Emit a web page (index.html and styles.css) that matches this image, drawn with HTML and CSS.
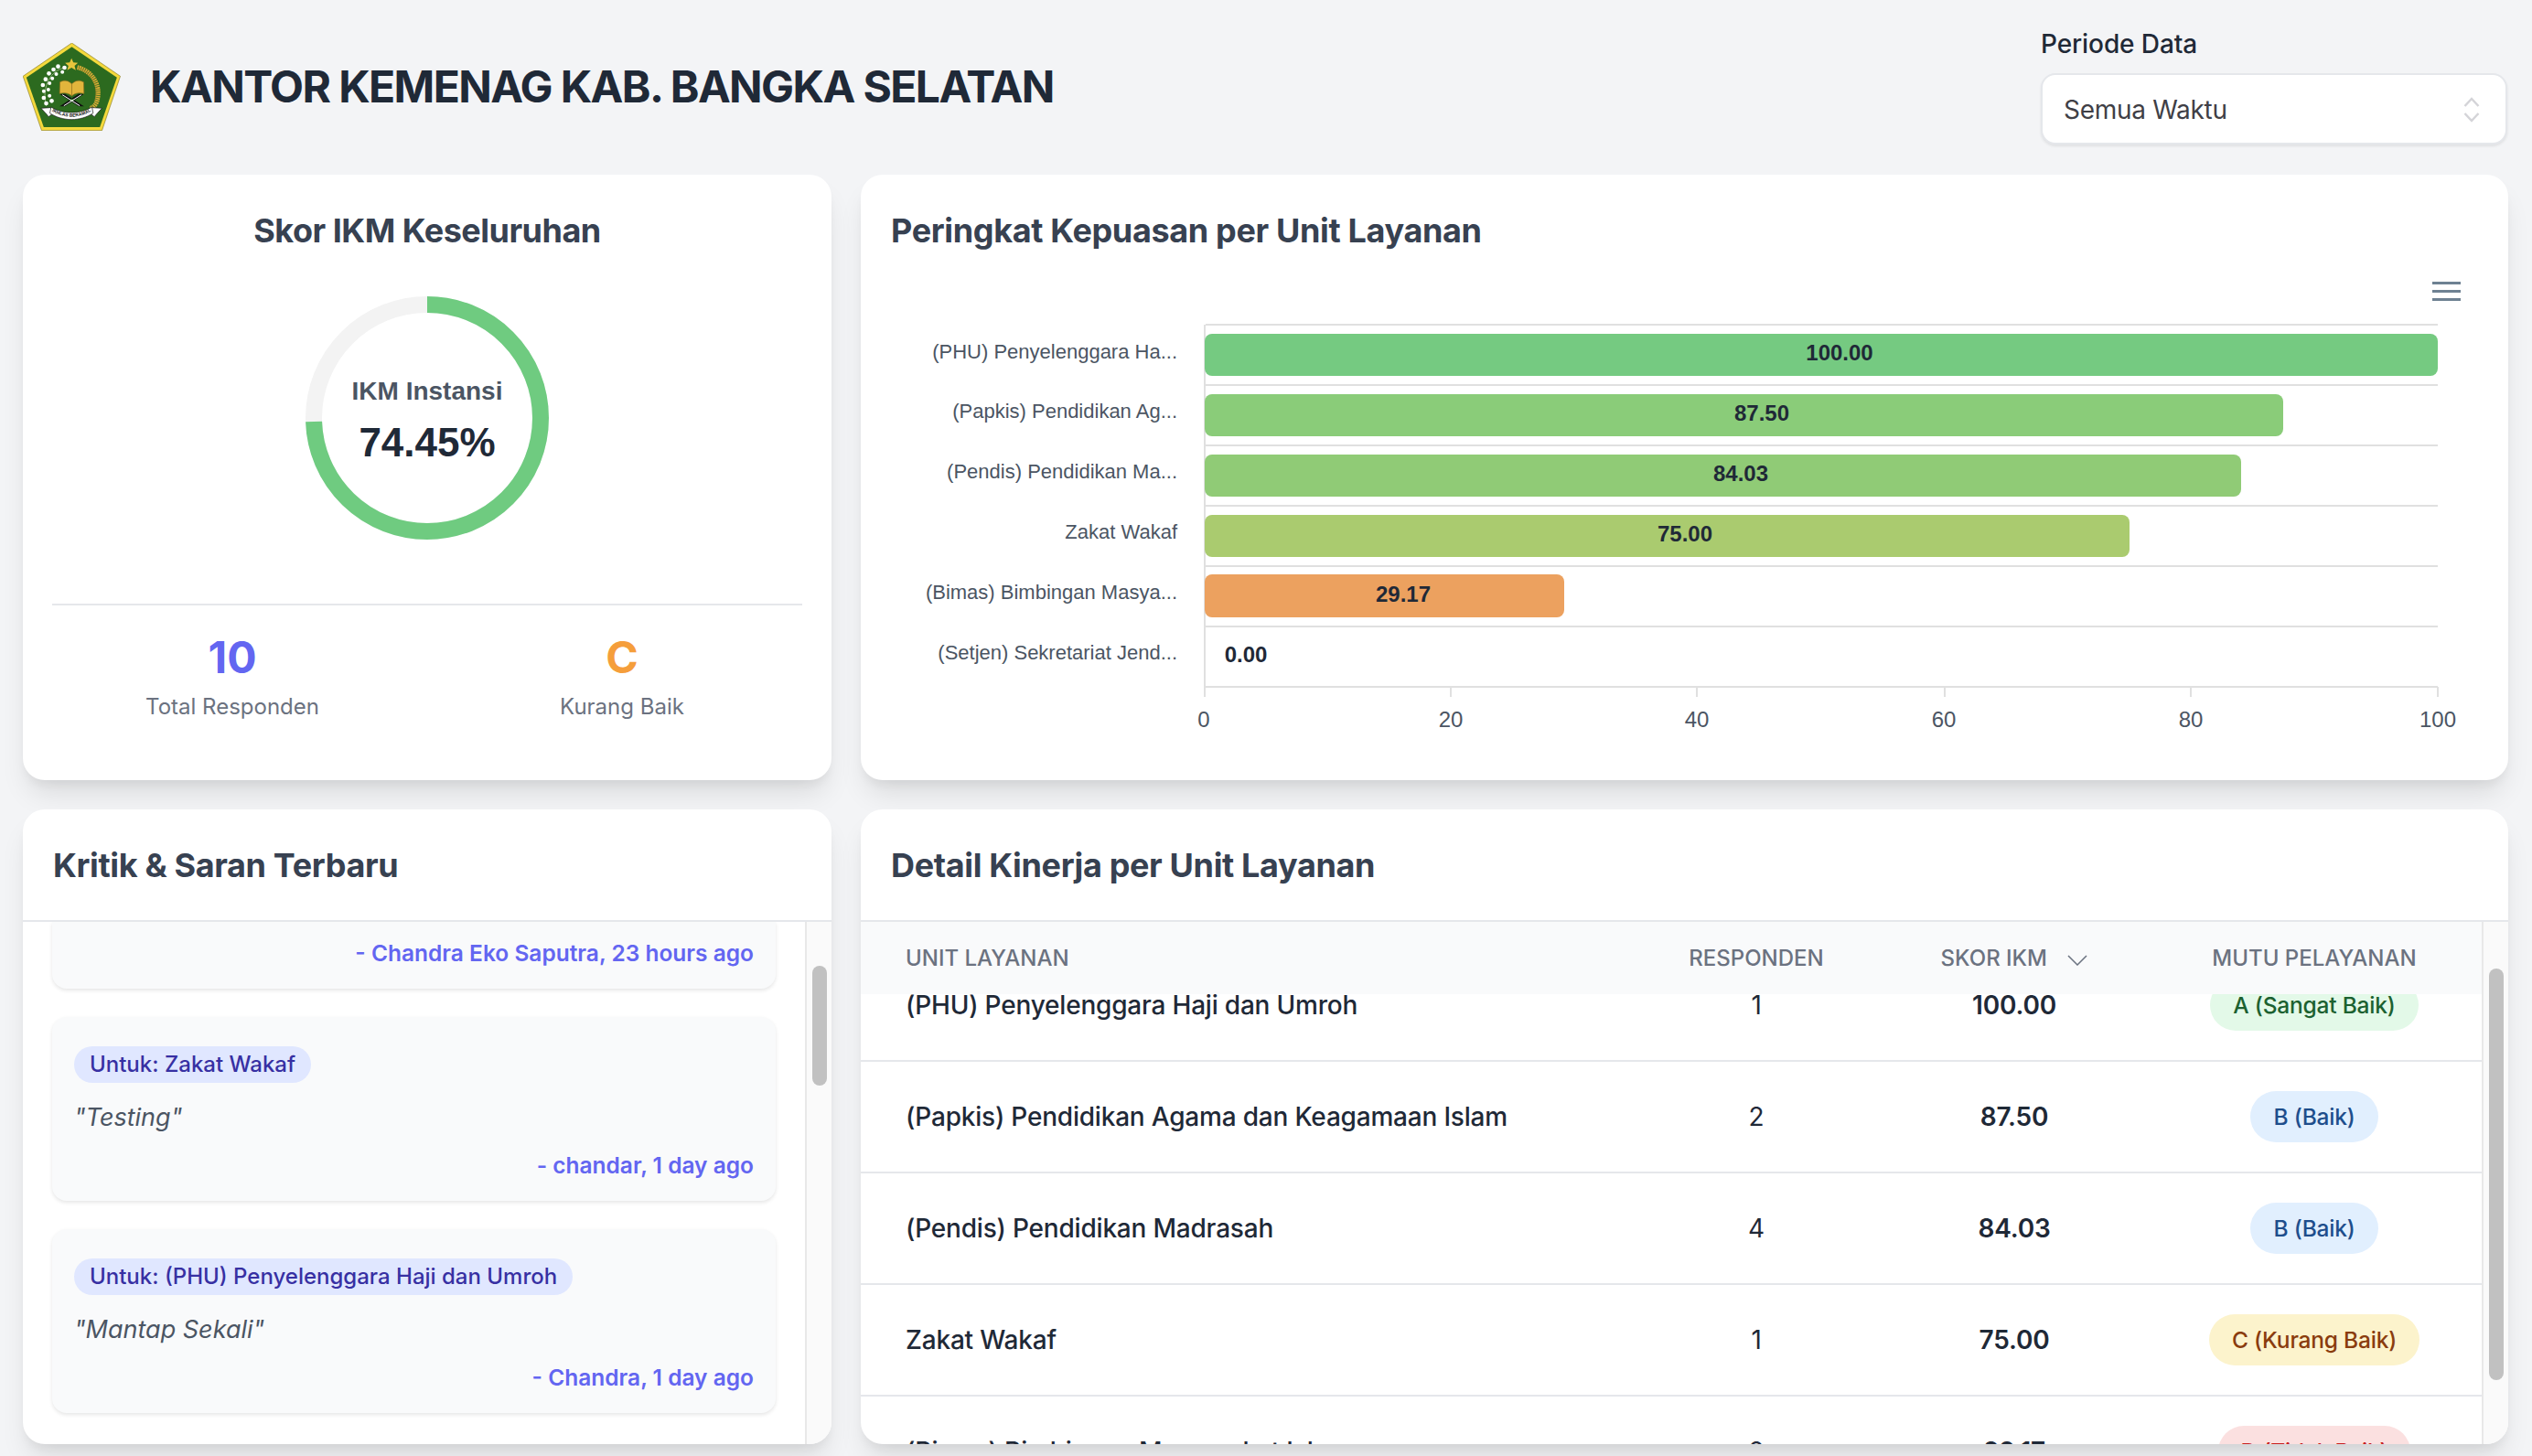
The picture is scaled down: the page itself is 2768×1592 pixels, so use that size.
FILE: index.html
```html
<!DOCTYPE html>
<html lang="id">
<head>
  <meta charset="UTF-8" />
  <meta name="viewport" content="width=device-width, initial-scale=1" />
  <title>Dashboard IKM</title>
  <link rel="stylesheet" href="styles.css">
</head>
<body>
  <div class="page">
    <header class="top">
      <div class="brand">
        <svg class="logo" viewBox="76 138 320 288">
          <polygon points="236,138 395,247 335,425 137,425 76,247" fill="#f4d93c" stroke="#8a7d2a" stroke-width="2"/>
          <polygon points="236,151 384,251 328,414 144,414 87,251" fill="#2c6a1f"/>
          <polygon points="235,188 241,202 256,203 245,213 249,227 235,219 221,227 225,213 214,203 229,202" fill="#e8c53c"/>
          <!-- padi -->
          <path d="M254 218 C300 228 335 275 318 330 C314 342 306 350 296 352" fill="none" stroke="#d9ab35" stroke-width="15" stroke-dasharray="5 2"/>
          <path d="M258 220 C298 232 326 275 312 328" fill="none" stroke="#a9862a" stroke-width="2"/>
          <!-- kapas -->
          <path d="M212 220 C170 225 135 280 152 345" fill="none" stroke="#8fb07a" stroke-width="3"/>
          <g fill="#fff">
            <circle cx="212" cy="219" r="7"/><circle cx="191" cy="215" r="7"/><circle cx="205" cy="233" r="6"/>
            <circle cx="176" cy="225" r="7"/><circle cx="185" cy="240" r="6"/><circle cx="161" cy="238" r="7"/>
            <circle cx="172" cy="254" r="6"/><circle cx="150" cy="257" r="7"/><circle cx="163" cy="270" r="6"/>
            <circle cx="141" cy="276" r="7"/><circle cx="159" cy="291" r="6"/><circle cx="144" cy="296" r="6"/>
            <circle cx="144" cy="318" r="7"/><circle cx="163" cy="311" r="6"/><circle cx="170" cy="328" r="7"/>
            <circle cx="152" cy="336" r="7"/>
          </g>
          <!-- kitab -->
          <path d="M236 272 C222 258 208 260 197 266 L196 304 C212 300 226 302 236 312 C246 302 260 300 276 304 L275 266 C264 260 250 258 236 272 Z" fill="#e2b53c" stroke="#8b6a1c" stroke-width="2"/>
          <path d="M236 272 L236 312" stroke="#8b6a1c" stroke-width="2"/>
          <path d="M197 306 L258 346 L276 346 L214 305 Z M275 306 L214 346 L196 346 L258 305 Z" fill="#111"/>
          <path d="M205 308 L262 344 M267 308 L210 344" stroke="#fff" stroke-width="3"/>
          <!-- pita -->
          <path d="M135 352 L166 350 L178 366 L160 380 L150 368 Z M335 352 L304 350 L292 366 L310 380 L320 368 Z" fill="#fff" stroke="#111" stroke-width="2"/>
          <path d="M168 348 C205 372 265 372 302 348 L306 368 C265 396 205 396 164 368 Z" fill="#fff" stroke="#111" stroke-width="2"/>
          <path id="ribbon-line" d="M172 362 C208 386 262 386 298 362" fill="none"/>
          <text class="logo-text"><textPath href="#ribbon-line" startOffset="50%" text-anchor="middle">IKHLAS BERAMAL</textPath></text>
        </svg>
        <h1>KANTOR KEMENAG KAB. BANGKA SELATAN</h1>
      </div>
      <div class="period">
        <label>Periode Data</label>
        <div class="select">
          <span>Semua Waktu</span>
          <svg class="select-arrows" width="18" height="28" viewBox="0 0 18 28">
            <path d="M1.5 10 L9 2 L16.5 10 M1.5 18 L9 26 L16.5 18" fill="none" stroke="#d4d4d8" stroke-width="2.5"/>
          </svg>
        </div>
      </div>
    </header>

    <main class="dashboard">
      <section class="card">
        <h2 class="card-title center">Skor IKM Keseluruhan</h2>
        <svg class="ring" width="266" height="266" viewBox="0 0 266 266">
          <circle cx="133" cy="133" r="124" fill="none" stroke="#f3f3f3" stroke-width="18"/>
          <circle cx="133" cy="133" r="124" fill="none" stroke="#6fcb80" stroke-width="18" stroke-dasharray="580 780" transform="rotate(-90 133 133)"/>
          <text class="ring-label" x="133" y="113">IKM Instansi</text>
          <text class="ring-value" x="133" y="175">74.45%</text>
        </svg>
        <div class="stats">
          <div class="stat">
            <div class="stat-num indigo">10</div>
            <div class="stat-label">Total Responden</div>
          </div>
          <div class="stat">
            <div class="stat-num orange">C</div>
            <div class="stat-label">Kurang Baik</div>
          </div>
        </div>
      </section>

      <section class="card">
        <h2 class="card-title">Peringkat Kepuasan per Unit Layanan</h2>
        <svg class="chart" width="1801" height="580" viewBox="941 273 1801 580">
          <g fill="#6e8192">
            <rect x="2659" y="308" width="31" height="3"/>
            <rect x="2659" y="317" width="31" height="3"/>
            <rect x="2659" y="326" width="31" height="3"/>
          </g>
          <g class="grid">
            <line x1="1318" x2="2665" y1="355" y2="355"/>
            <line x1="1318" x2="2665" y1="421" y2="421"/>
            <line x1="1318" x2="2665" y1="487" y2="487"/>
            <line x1="1318" x2="2665" y1="553" y2="553"/>
            <line x1="1318" x2="2665" y1="619" y2="619"/>
            <line x1="1318" x2="2665" y1="685" y2="685"/>
            <line x1="1318" x2="2665" y1="751" y2="751"/>
            <line x1="1317" x2="1317" y1="355" y2="762"/>
            <line x1="1586" x2="1586" y1="751" y2="762"/>
            <line x1="1855" x2="1855" y1="751" y2="762"/>
            <line x1="2126" x2="2126" y1="751" y2="762"/>
            <line x1="2395" x2="2395" y1="751" y2="762"/>
            <line x1="2665" x2="2665" y1="751" y2="762"/>
          </g>
          <rect x="1317" y="365" width="1348" height="46" rx="8" fill="#75ca81"/>
          <rect x="1317" y="431" width="1179" height="46" rx="8" fill="#8acc79"/>
          <rect x="1317" y="497" width="1133" height="46" rx="8" fill="#90cb76"/>
          <rect x="1317" y="563" width="1011" height="46" rx="8" fill="#aacb6f"/>
          <rect x="1317" y="628" width="393" height="47" rx="8" fill="#eca15f"/>
          <g class="bar-values">
            <text x="2011" y="394">100.00</text>
            <text x="1926" y="460">87.50</text>
            <text x="1903" y="526">84.03</text>
            <text x="1842" y="592">75.00</text>
            <text x="1534" y="658">29.17</text>
            <text x="1362" y="724">0.00</text>
          </g>
          <g class="y-labels">
            <text x="1287" y="392">(PHU) Penyelenggara Ha...</text>
            <text x="1287" y="457">(Papkis) Pendidikan Ag...</text>
            <text x="1287" y="523">(Pendis) Pendidikan Ma...</text>
            <text x="1287" y="589">Zakat Wakaf</text>
            <text x="1287" y="655">(Bimas) Bimbingan Masya...</text>
            <text x="1287" y="721">(Setjen) Sekretariat Jend...</text>
          </g>
          <g class="x-labels">
            <text x="1316" y="795">0</text>
            <text x="1586" y="795">20</text>
            <text x="1855" y="795">40</text>
            <text x="2125" y="795">60</text>
            <text x="2395" y="795">80</text>
            <text x="2665" y="795">100</text>
          </g>
        </svg>
      </section>

      <section class="card">
        <h2 class="card-title ruled">Kritik &amp; Saran Terbaru</h2>
        <div class="scroll-area">
          <div class="notes">
            <div class="note note-cut">
              <div class="note-meta">- Chandra Eko Saputra, 23 hours ago</div>
            </div>
            <div class="note">
              <span class="chip">Untuk: Zakat Wakaf</span>
              <p class="note-text">"Testing"</p>
              <div class="note-meta">- chandar, 1 day ago</div>
            </div>
            <div class="note">
              <span class="chip">Untuk: (PHU) Penyelenggara Haji dan Umroh</span>
              <p class="note-text">"Mantap Sekali"</p>
              <div class="note-meta">- Chandra, 1 day ago</div>
            </div>
          </div>
          <div class="rail"><div class="thumb thumb-notes"></div></div>
        </div>
      </section>

      <section class="card">
        <h2 class="card-title ruled">Detail Kinerja per Unit Layanan</h2>
        <div class="scroll-area">
          <div class="table">
            <div class="tr thead">
              <div class="td first">Unit Layanan</div>
              <div class="td">Responden</div>
              <div class="td">Skor IKM
                <svg class="sort" width="22" height="12" viewBox="0 0 22 12"><path d="M1 1 L11 11 L21 1" fill="none" stroke="#6b7280" stroke-width="1.5"/></svg>
              </div>
              <div class="td">Mutu Pelayanan</div>
            </div>
            <div class="tbody">
              <div class="rows">
                <div class="tr">
                  <div class="td first">(PHU) Penyelenggara Haji dan Umroh</div>
                  <div class="td num">1</div>
                  <div class="td score">100.00</div>
                  <div class="td"><span class="pill pill-a">A (Sangat Baik)</span></div>
                </div>
                <div class="tr">
                  <div class="td first">(Papkis) Pendidikan Agama dan Keagamaan Islam</div>
                  <div class="td num">2</div>
                  <div class="td score">87.50</div>
                  <div class="td"><span class="pill pill-b">B (Baik)</span></div>
                </div>
                <div class="tr">
                  <div class="td first">(Pendis) Pendidikan Madrasah</div>
                  <div class="td num">4</div>
                  <div class="td score">84.03</div>
                  <div class="td"><span class="pill pill-b">B (Baik)</span></div>
                </div>
                <div class="tr">
                  <div class="td first">Zakat Wakaf</div>
                  <div class="td num">1</div>
                  <div class="td score">75.00</div>
                  <div class="td"><span class="pill pill-c">C (Kurang Baik)</span></div>
                </div>
                <div class="tr">
                  <div class="td first">(Bimas) Bimbingan Masyarakat Islam</div>
                  <div class="td num">2</div>
                  <div class="td score">29.17</div>
                  <div class="td"><span class="pill pill-d">D (Tidak Baik)</span></div>
                </div>
              </div>
            </div>
          </div>
          <div class="rail"><div class="thumb thumb-table"></div></div>
        </div>
      </section>
    </main>
  </div>
</body>
</html>
```

FILE: styles.css
```css
* {
  margin: 0; padding: 0; box-sizing: border-box;
}
body {
  background-color: #f3f4f6;
  font-family: Inter, "Noto Sans", sans-serif;
  color: #1f2937;
}
.page {
  height: 1592px;
  overflow: hidden;
  padding: 31px 26px 13px 25px;
  display: flex;
  flex-direction: column;
}

/* header */
.top {
  height: 127px;
  margin-bottom: 33px;
  display: flex;
  justify-content: space-between;
  align-items: center;
}
.brand {
  display: flex;
  align-items: center;
  gap: 32px;
}
.logo {
  width: 107px;
  height: 96px;
}
.logo-text {
  font-family: "Liberation Sans", sans-serif;
  font-size: 15px;
  font-weight: 700;
  fill: #111;
}
.brand h1 {
  font-size: 48px;
  font-weight: 700;
  letter-spacing: -1.6px;
  color: #1f2937;
}
.period {
  width: 510px;
  margin-right: 1px;
}
.period label {
  display: block;
  font-size: 28px;
  font-weight: 500;
  letter-spacing: -0.1px;
  line-height: 34px;
  margin-bottom: 15px;
}
.select {
  height: 78px;
  background-color: #fff;
  border: 2px solid #e5e7eb;
  border-radius: 16px;
  box-shadow: 0 2px 3px rgba(0, 0, 0, 0.08);
  padding: 1px 28px 0 23px;
  display: flex;
  justify-content: space-between;
  align-items: center;
  font-size: 28px;
  letter-spacing: -0.3px;
  color: #3f3f46;
}

/* grid */
.dashboard {
  display: grid;
  grid-template-columns: 884px 1801px;
  grid-template-rows: 662px 694px;
  gap: 32px;
}
.card {
  background-color: #fff;
  border-radius: 24px;
  box-shadow: 0 20px 30px -6px rgba(0, 0, 0, 0.1), 0 8px 12px -4px rgba(0, 0, 0, 0.06);
  overflow: hidden;
  display: flex;
  flex-direction: column;
}
.card-title {
  padding: 40px 33px 0;
  font-size: 36px;
  line-height: 42px;
  font-weight: 700;
  letter-spacing: -0.35px;
  color: #374151;
}
.card-title.center { text-align: center; letter-spacing: -0.5px; }
.card-title.ruled {
  padding-bottom: 39px;
  border-bottom: 2px solid #e5e7eb;
}

/* score */
.ring {
  display: block;
  margin: 51px auto 70px;
}
.ring text {
  font-family: "Liberation Sans", Arial, sans-serif;
  font-weight: 700;
  text-anchor: middle;
}
.ring-label { font-size: 28px; fill: #4b5563; }
.ring-value { font-size: 44px; fill: #1f2937; }
.stats {
  margin: 0 32px;
  padding-top: 28px;
  border-top: 2px solid #e5e7eb;
  display: grid;
  grid-template-columns: 1fr 1fr;
  gap: 32px;
  text-align: center;
}
.stat-num {
  font-size: 48px;
  line-height: 58px;
  font-weight: 700;
}
.stat-num.indigo { color: #6366f1; }
.stat-num.orange { color: #f59e3b; }
.stat-label {
  margin-top: 10px;
  font-size: 24px;
  line-height: 30px;
  color: #6b7280;
}

/* chart */
.chart { display: block; }
.chart text { font-family: "Liberation Sans", Arial, sans-serif; }
.grid line {
  stroke: #e0e0e0;
  stroke-width: 2;
}
.bar-values text {
  font-size: 24px;
  font-weight: 700;
  text-anchor: middle;
  fill: #1f2937;
}
.y-labels text {
  font-size: 22px;
  text-anchor: end;
  fill: #4b5563;
}
.x-labels text {
  font-size: 24px;
  text-anchor: middle;
  fill: #4b5563;
}

/* scroll panels */
.scroll-area {
  flex: 1;
  min-height: 0;
  display: flex;
}
.rail {
  width: 29px;
  flex-shrink: 0;
  background-color: #fafafa;
  border-left: 2px solid #e8e8e8;
  padding-left: 6px;
}
.thumb {
  width: 16px;
  background-color: #c1c1c1;
  border-radius: 8px;
}
.thumb-notes { margin-top: 48px; height: 131px; }
.thumb-table { margin-top: 51px; height: 450px; }

/* feedback list */
.notes {
  flex: 1;
  overflow: hidden;
  padding: 0 32px;
  display: flex;
  flex-direction: column;
  gap: 31px;
}
.note {
  flex-shrink: 0;
  background-color: #f9fafb;
  border-radius: 16px;
  box-shadow: 0 2px 4px rgba(0, 0, 0, 0.1);
  padding: 32px 24px 23px;
}
.note-cut {
  padding-top: 18px;
  border-radius: 0 0 16px 16px;
}
.chip {
  display: inline-block;
  height: 40px;
  line-height: 40px;
  padding: 0 17px;
  background-color: #e0e7ff;
  color: #3730a3;
  border-radius: 20px;
  font-size: 24px;
  font-weight: 500;
}
.note-text {
  margin-top: 20px;
  font-size: 27px;
  line-height: 36px;
  font-style: italic;
  color: #4b5563;
}
.note-meta {
  margin-top: 18px;
  font-size: 24.5px;
  line-height: 32px;
  font-weight: 600;
  text-align: right;
  color: #6366f1;
}
.note-cut .note-meta { margin-top: 0; }

/* table */
.table {
  flex: 1;
  min-width: 0;
  display: flex;
  flex-direction: column;
}
.tr {
  display: grid;
  grid-template-columns: 843px 272px 292px 364px;
  align-items: center;
  height: 122px;
  border-bottom: 2px solid #e5e7eb;
  font-size: 28px;
  font-weight: 500;
  letter-spacing: -0.2px;
}
.td {
  text-align: center;
}
.td.first {
  text-align: left;
  padding-left: 49px;
}
.td.num { font-weight: 400; }
.td.score { font-weight: 600; }
.thead {
  height: 79px;
  border-bottom: none;
  background-color: #f9fafb;
  font-size: 24px;
  font-weight: 500;
  text-transform: uppercase;
  letter-spacing: 0;
  color: #6b7280;
}
.sort { margin-left: 16px; }
.tbody {
  flex: 1;
  min-height: 0;
  overflow: hidden;
}
.rows {
  margin-top: -48px;
}
.pill {
  display: inline-block;
  height: 56px;
  line-height: 56px;
  padding: 0 25px;
  border-radius: 28px;
  font-size: 24.5px;
}
.pill-a { background-color: #e3f9e8; color: #1c6130; }
.pill-b { background-color: #e1effe; color: #1e4e8c; }
.pill-c { background-color: #fcf3cc; color: #8a3c0e; }
.pill-d { background-color: #fbe0e0; color: #c81e1e; }
```
